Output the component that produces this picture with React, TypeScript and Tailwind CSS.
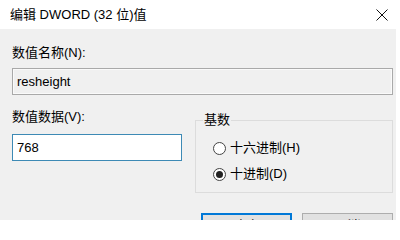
import React from 'react';

const font = { fontFamily: '"Liberation Sans", "Noto Sans CJK SC", sans-serif' };

function Radio({ checked, label }: { checked?: boolean; label: string }) {
  return (
    <label className="flex items-center gap-[4px] h-[16px] text-[13px] leading-[16px] text-black">
      <span className="w-[13px] h-[13px] rounded-full border border-[#444] bg-white flex items-center justify-center">
        {checked && <span className="w-[7px] h-[7px] rounded-full bg-[#222]" />}
      </span>
      <span>{label}</span>
    </label>
  );
}

export default function App() {
  return (
    <div className="w-[400px] h-[220px] overflow-hidden bg-white flex flex-col" style={font}>
      {/* Title bar */}
      <div className="h-[29px] shrink-0 flex items-center justify-between pl-[10px] pr-[6px]">
        <span className="text-[13px] text-black">编辑 DWORD (32 位)值</span>
        <svg width="12" height="12" viewBox="0 0 12 12" className="mr-[6px]">
          <path d="M0.5 0.5 L11.5 11.5 M11.5 0.5 L0.5 11.5" stroke="#111" strokeWidth="1" />
        </svg>
      </div>

      {/* Body */}
      <div className="flex-1 bg-[#f0f0f0] mr-[4px] pl-[12px] pt-[16px] flex flex-col">
        <div className="text-[13px] leading-[16px] text-black">数值名称(N):</div>
        <div className="mt-[7px] w-[381px] h-[27px] border border-[#a9a9a9] bg-[#f0f0f0] shadow-[inset_0_0_0_1px_#fafafa] flex items-center pl-[4px] text-[13px] text-black">
          resheight
        </div>

        <div className="mt-[14px] flex">
          <div className="w-[170px] flex flex-col">
            <div className="text-[13px] leading-[16px] text-black">数值数据(V):</div>
            <div className="mt-[9px] h-[27px] border border-[#3d8ab5] bg-white flex items-center pl-[4px] text-[13px] text-black">
              768
            </div>
          </div>

          <fieldset className="ml-[13px] mt-[3px] w-[198px] h-[81px] border border-[#dcdcdc] pl-[17px]">
            <legend className="ml-[-10px] px-[1px] text-[13px] leading-[16px] text-black">基数</legend>
            <div className="mt-[12px] flex flex-col gap-[10px]">
              <Radio label="十六进制(H)" />
              <Radio checked label="十进制(D)" />
            </div>
          </fieldset>
        </div>

        <div className="mt-[20px] flex gap-[10px] pl-[189px]">
          <button className="w-[91px] h-[26px] border-2 border-[#0078d7] bg-[#e1e1e1] text-[13px] text-black">确定</button>
          <button className="w-[91px] h-[26px] border border-[#adadad] bg-[#e1e1e1] text-[13px] text-black">取消</button>
        </div>
      </div>
    </div>
  );
}
